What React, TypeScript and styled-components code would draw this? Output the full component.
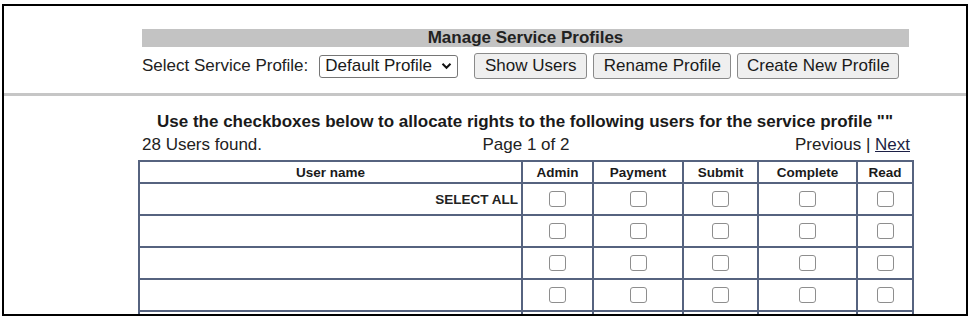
import styled, { createGlobalStyle } from 'styled-components';

const GlobalStyle = createGlobalStyle`
  html, body {
    margin: 0;
    padding: 0;
    background: #ffffff;
  }
  body {
    font-family: 'Liberation Sans', Arial, sans-serif;
    color: #222222;
  }
`;

export const Frame = styled.div`
  margin: 4px 4px 0 2px;
  height: 308px;
  border: 2px solid #000000;
  overflow: hidden;
  background: #ffffff;
`;

export const TopPanel = styled.div`
  width: 767px;
  margin-left: 138px;
  padding-top: 23px;
`;

export const TitleBar = styled.div`
  height: 18px;
  line-height: 18px;
  background: #c3c3c3;
  text-align: center;
  font-weight: bold;
  font-size: 17px;
  color: #222;
`;

export const Controls = styled.div`
  display: flex;
  align-items: center;
  height: 26px;
  margin-top: 6px;
  font-size: 17px;
`;

export const Label = styled.span`
  margin-right: 11px;
`;

export const Select = styled.div`
  display: flex;
  align-items: center;
  justify-content: space-between;
  box-sizing: border-box;
  width: 139px;
  height: 23px;
  padding: 0 5px 0 5px;
  border: 1px solid #767676;
  border-radius: 3px;
  background: #ffffff;
  font-size: 17px;
  color: #1a1a1a;
  margin-right: 16px;
`;

export const Button = styled.button<{ $w: number }>`
  box-sizing: border-box;
  width: ${(p) => p.$w}px;
  height: 26px;
  margin-right: 6px;
  padding: 0;
  border: 1px solid #8a8a8a;
  border-radius: 3px;
  background: #efefef;
  font-family: 'Liberation Sans', Arial, sans-serif;
  font-size: 17px;
  color: #1a1a1a;
`;

export const Separator = styled.div`
  height: 3px;
  margin-top: 14px;
  background: #c6c6c6;
`;

export const Lower = styled.div`
  width: 774px;
  margin-left: 134px;
`;

export const Heading = styled.div`
  margin-top: 16px;
  line-height: 20px;
  font-size: 17px;
  font-weight: bold;
  text-align: center;
  color: #1a1a1a;
`;

export const InfoRow = styled.div`
  display: grid;
  grid-template-columns: 1fr 1fr 1fr;
  margin-top: 3px;
  padding: 0 2px 0 4px;
  line-height: 20px;
  font-size: 17px;
`;

export const InfoCell = styled.span<{ $align: string }>`
  text-align: ${(p) => p.$align};
`;

export const NextLink = styled.a`
  color: #1c1f45;
  text-decoration: underline;
`;

export const Table = styled.table`
  margin-top: 5px;
  width: 774px;
  border-collapse: collapse;
  table-layout: fixed;
  font-size: 13.5px;
`;

export const Th = styled.th<{ $w: number }>`
  width: ${(p) => p.$w}px;
  height: 20px;
  padding: 0;
  border: 2px solid #56637f;
  font-weight: bold;
  color: #1a1a1a;
`;

export const Td = styled.td<{ $right?: boolean }>`
  height: 30px;
  padding: 0 3px;
  border: 2px solid #56637f;
  text-align: ${(p) => (p.$right ? 'right' : 'center')};
  font-weight: bold;
  vertical-align: middle;
`;

export const Check = styled.span`
  display: inline-block;
  box-sizing: border-box;
  width: 17px;
  height: 16px;
  margin-top: 3px;
  border: 1.5px solid #8e8e8e;
  border-radius: 3px;
  background: #ffffff;
`;

const COLUMNS = [
  { name: 'User name', w: 381 },
  { name: 'Admin', w: 69 },
  { name: 'Payment', w: 88 },
  { name: 'Submit', w: 73 },
  { name: 'Complete', w: 97 },
  { name: 'Read', w: 54 },
];

const ROWS = ['SELECT ALL', '', '', '', ''];

const Chevron = () => (
  <svg width="11" height="8" viewBox="0 0 11 8">
    <path d="M1.5 1.8 L5.5 5.8 L9.5 1.8" fill="none" stroke="#111" strokeWidth="2" />
  </svg>
);

const App = () => {
  return (
    <>
      <GlobalStyle />
      <Frame>
        <TopPanel>
          <TitleBar>Manage Service Profiles</TitleBar>
          <Controls>
            <Label>Select Service Profile:</Label>
            <Select>
              <span>Default Profile</span>
              <Chevron />
            </Select>
            <Button $w={113}>Show Users</Button>
            <Button $w={138}>Rename Profile</Button>
            <Button $w={162}>Create New Profile</Button>
          </Controls>
        </TopPanel>
        <Separator />
        <Lower>
          <Heading>
            Use the checkboxes below to allocate rights to the following users for the service profile ""
          </Heading>
          <InfoRow>
            <InfoCell $align="left">28 Users found.</InfoCell>
            <InfoCell $align="center">Page 1 of 2</InfoCell>
            <InfoCell $align="right">
              Previous | <NextLink href="#">Next</NextLink>
            </InfoCell>
          </InfoRow>
          <Table>
            <thead>
              <tr>
                {COLUMNS.map((c) => (
                  <Th key={c.name} $w={c.w}>
                    {c.name}
                  </Th>
                ))}
              </tr>
            </thead>
            <tbody>
              {ROWS.map((label, i) => (
                <tr key={i}>
                  <Td $right>{label}</Td>
                  {COLUMNS.slice(1).map((c) => (
                    <Td key={c.name}>
                      <Check />
                    </Td>
                  ))}
                </tr>
              ))}
            </tbody>
          </Table>
        </Lower>
      </Frame>
    </>
  );
};

export default App;
